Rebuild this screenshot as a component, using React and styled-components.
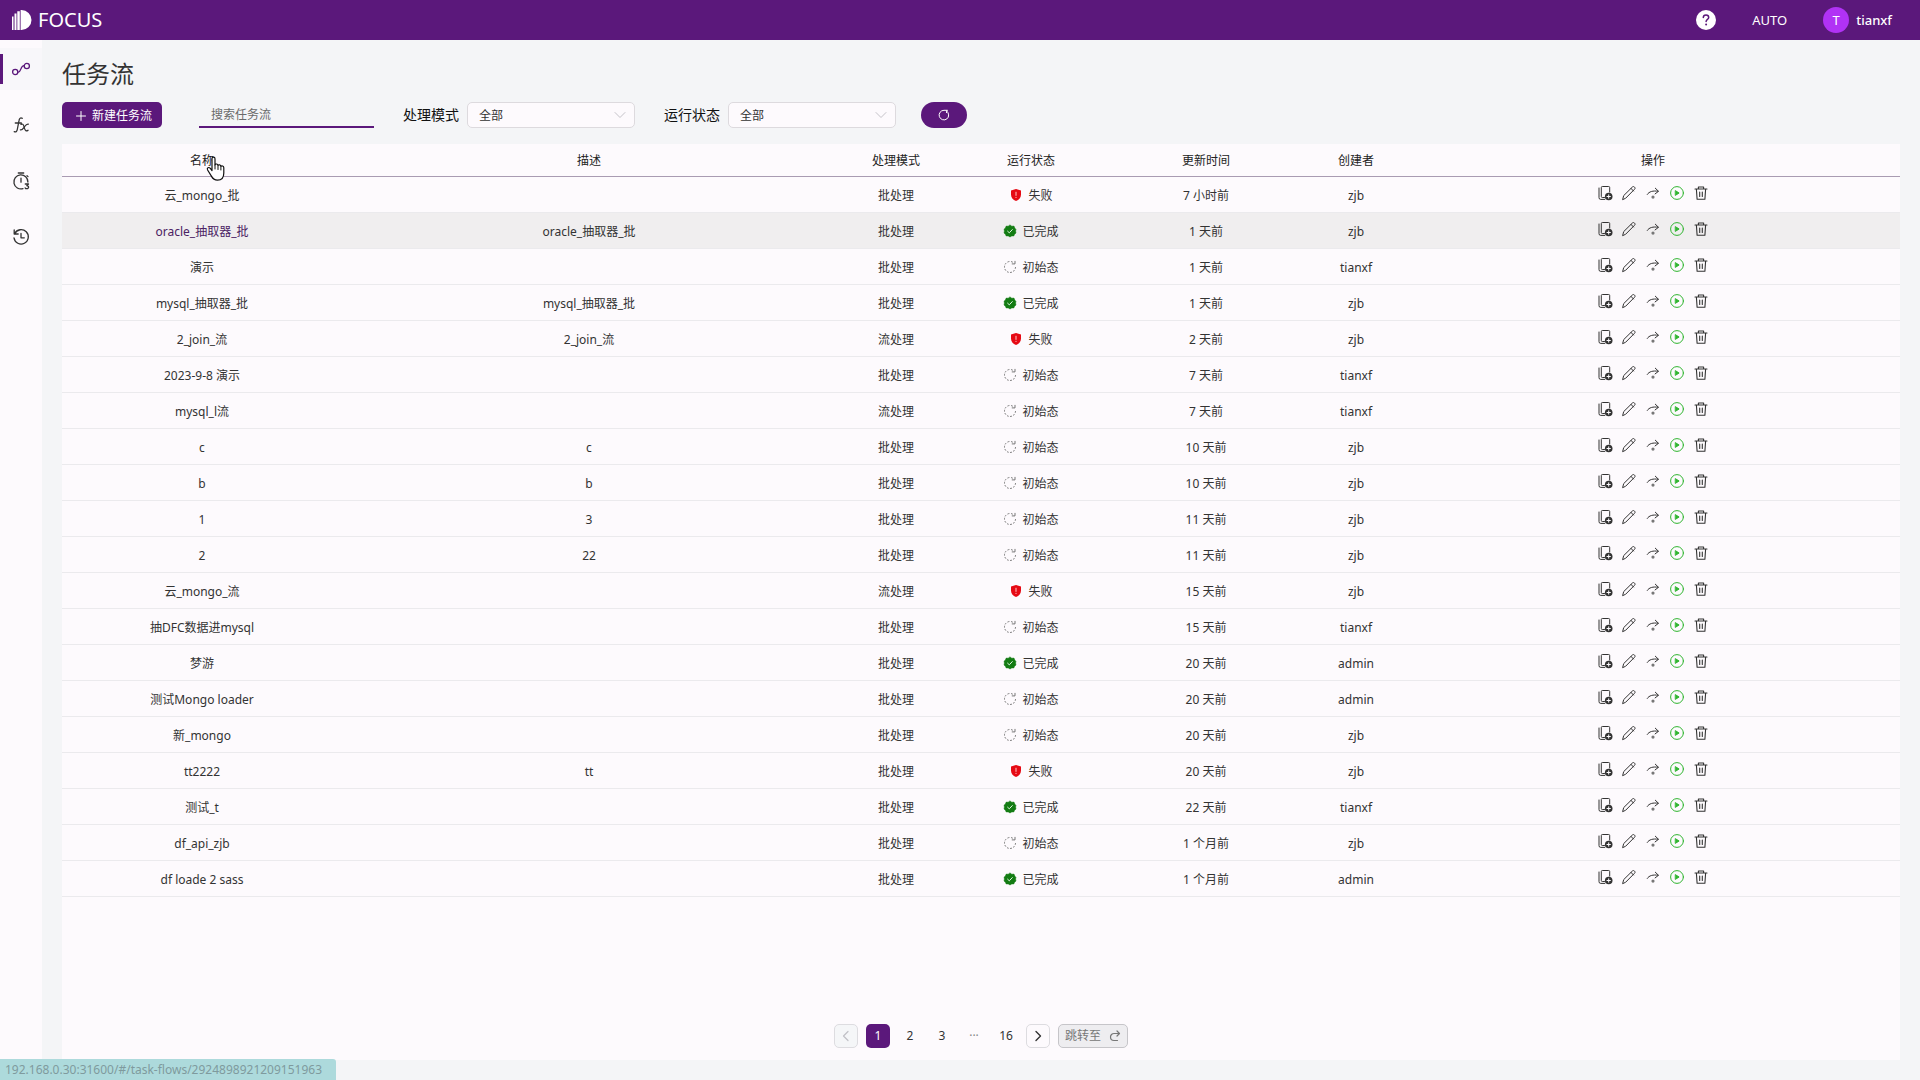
import React from "react";
import styled, { createGlobalStyle, css } from "styled-components";

const PURPLE = "#5b187b";
const PANEL = "#fdfafd";

const GlobalStyle = createGlobalStyle`
  *, *::before, *::after { box-sizing: border-box; }
  body {
    margin: 0;
    background: #f4f5f7;
    color: #333;
    font-family: "Noto Sans", "Noto Sans CJK SC", sans-serif;
    font-size: 12px;
    line-height: 20px;
  }
  button, input, select { font: inherit; color: inherit; }
  svg { display: block; flex: none; }
`;

const Page = styled.div`
  display: flex;
  flex-direction: column;
  min-height: 100vh;
`;

const TopBar = styled.header`
  display: flex;
  align-items: center;
  justify-content: space-between;
  height: 40px;
  padding: 0 28px 0 12px;
  background: ${PURPLE};
  color: #fff;
`;

const Brand = styled.a`
  display: flex;
  align-items: center;
  gap: 6px;
  color: inherit;
  font-size: 20px;
  line-height: 28px;
  text-decoration: none;
`;

const TopActions = styled.div`
  display: flex;
  align-items: center;
  gap: 36px;
  font-size: 13px;
`;

const BarButton = styled.button`
  display: flex;
  align-items: center;
  gap: 7px;
  padding: 0;
  border: 0;
  background: none;
  font-weight: ${(p) => (p.$strong ? 500 : 400)};
  cursor: pointer;
`;

const Avatar = styled.span`
  width: 26px;
  height: 26px;
  border-radius: 50%;
  background: #b132f5;
  font-weight: 400;
  line-height: 26px;
  text-align: center;
`;

const Body = styled.div`
  display: flex;
  flex: 1;
`;

const SideNav = styled.nav`
  display: flex;
  flex-direction: column;
  gap: 14px;
  width: 42px;
  padding-top: 8px;
  background: ${PANEL};
`;

const NavLink = styled.a`
  display: flex;
  align-items: center;
  height: 42px;
  color: ${(p) => (p.$active ? PURPLE : "#333")};
  background: ${(p) => (p.$active ? "#f8f7fa" : "transparent")};
  &::before {
    content: "";
    width: 3px;
    height: 30px;
    margin-right: 8px;
    background: ${(p) => (p.$active ? PURPLE : "transparent")};
  }
`;

const Main = styled.main`
  display: flex;
  flex: 1;
  flex-direction: column;
  min-width: 0;
  padding: 18px 20px 20px;
`;

const Title = styled.h1`
  margin: 0 0 12px;
  font-size: 24px;
  font-weight: 400;
  line-height: 32px;
`;

const Toolbar = styled.div`
  display: flex;
  align-items: center;
  gap: 29px;
  height: 26px;
  margin-bottom: 16px;
`;

const CreateButton = styled.button`
  display: flex;
  align-items: center;
  justify-content: center;
  gap: 5px;
  width: 100px;
  height: 26px;
  margin-right: 8px;
  padding: 1px 0 0 3px;
  border: 0;
  border-radius: 5px;
  background: ${PURPLE};
  color: #fff;
  cursor: pointer;
`;

const SearchInput = styled.input`
  width: 175px;
  height: 26px;
  padding: 0 12px;
  border: 0;
  border-bottom: 2px solid ${PURPLE};
  border-radius: 0;
  outline: 0;
  background: transparent;
  &::placeholder { color: #6a6a6a; opacity: 1; }
`;

const Field = styled.label`
  display: flex;
  align-items: center;
  gap: 8px;
  color: #111;
  font-size: 14px;
`;

const SelectBox = styled.span`
  display: grid;
  align-items: center;
  width: 168px;
  font-size: 12px;
  color: #333;
  & > * { grid-area: 1 / 1; }
  svg {
    justify-self: end;
    margin-right: 9px;
    color: #c4c2c8;
    pointer-events: none;
  }
`;

const Select = styled.select`
  width: 100%;
  height: 26px;
  padding: 1px 11px 0;
  border: 1px solid #dddade;
  border-radius: 5px;
  appearance: none;
  background: ${PANEL};
`;

const RefreshButton = styled.button`
  display: flex;
  align-items: center;
  justify-content: center;
  width: 46px;
  height: 26px;
  margin-left: -4px;
  padding: 0;
  border: 0;
  border-radius: 13px;
  background: ${PURPLE};
  color: #fff;
`;

const Panel = styled.section`
  display: flex;
  flex: 1;
  flex-direction: column;
  justify-content: space-between;
  padding-bottom: 12px;
  background: ${PANEL};
`;

const Table = styled.table`
  width: 100%;
  border-collapse: separate;
  border-spacing: 0;
  table-layout: fixed;
  text-align: center;
`;

const Col = styled.col`
  width: ${(p) => (p.$width ? `${p.$width}px` : "auto")};
`;

const Th = styled.th`
  height: 33px;
  padding: 2px 0 0;
  border-bottom: 1px solid #a99bb2;
  color: #222;
  font-weight: 400;
`;

const Td = styled.td`
  height: 36px;
  padding: 2px 0 0;
  border-bottom: 1px solid #ebeaed;
`;

const Row = styled.tr`
  ${(p) => p.$hovered && css`background: #f0eeef;`}
`;

const FlowLink = styled.a`
  color: ${(p) => (p.$hovered ? "#4b2263" : "inherit")};
  text-decoration: none;
`;

const Status = styled.span`
  display: flex;
  align-items: center;
  justify-content: center;
  gap: 5px;
  svg { margin-bottom: 2px; }
`;

const RowActions = styled.div`
  display: flex;
  justify-content: center;
  gap: 8px;
  padding-bottom: 6px;
`;

const IconButton = styled.button`
  width: 16px;
  height: 16px;
  padding: 0;
  border: 0;
  background: none;
  color: ${(p) => (p.$run ? "#2fb52f" : "#333")};
  cursor: pointer;
`;

const Pager = styled.nav`
  display: flex;
  justify-content: center;
  gap: 8px;
`;

const pageBox = css`
  display: flex;
  align-items: center;
  justify-content: center;
  width: 24px;
  height: 24px;
  padding: 0;
  border: 1px solid transparent;
  border-radius: 5px;
  background: none;
`;

const PageButton = styled.button`
  ${pageBox}
  ${(p) => p.$current && css`background: ${PURPLE}; color: #fff;`}
  ${(p) => p.$outlined && css`border-color: #dddce0;`}
  &:disabled { background: #f5f6f8; color: #c0c0c6; }
`;

const PageDots = styled.span`
  ${pageBox}
  color: #888;
`;

const JumpButton = styled.button`
  ${pageBox}
  justify-content: space-between;
  width: 70px;
  padding: 0 6px;
  border-color: #c6c5c9;
  background: #eeedf0;
  color: #777;
`;

const LinkStatus = styled.div`
  position: fixed;
  bottom: 0;
  left: 0;
  padding: 1px 14px 0 5px;
  border-top-right-radius: 3px;
  background: #addadc;
  color: #7f9a9e;
`;

const Pointer = styled.svg`
  position: absolute;
  top: 156px;
  left: 206px;
`;

const Svg = ({ size = 16, view = 16, width = 1, children, ...rest }) => (
  <svg width={size} height={size} viewBox={`0 0 ${view} ${view}`} fill="none" stroke="currentColor"
    strokeWidth={width} strokeLinecap="round" strokeLinejoin="round" aria-hidden="true" {...rest}>
    {children}
  </svg>
);

const Logo = () => (
  <svg width="20" height="20" viewBox="0 0 20 20" fill="#fff" aria-hidden="true">
    <path d="M0 6.500h1.500V20H0zM2.500 3.500h2V20h-2zM5.300 1.200h2.500V20H5.300zM8.600 0H9.500a10 10 0 0 1 0 20H8.600z" />
  </svg>
);

const HelpIcon = () => (
  <Svg size={20} view={20} width={1.5}>
    <circle cx="10" cy="10" r="10" fill="#fff" stroke="none" />
    <path stroke={PURPLE} d="M7.3 7.6C7.3 6 8.4 5 10 5s2.7 1 2.7 2.4c0 1.9-2.6 2.1-2.6 4.2" />
    <circle cx="10.1" cy="14.6" r="1" fill={PURPLE} stroke="none" />
  </Svg>
);

const FlowIcon = () => (
  <Svg size={20} view={20} width={1.3}>
    <circle cx="4.2" cy="13" r="2.600" />
    <circle cx="15.8" cy="7" r="2.600" />
    <path d="M6.9 13.3c3.6 0 2.2-6.6 6.2-6.6" />
  </Svg>
);

const FxIcon = () => (
  <Svg size={20} view={20} width={1.3}>
    <path d="M11.3 3.3C9.2 2.2 8.3 3.8 8 5.7L6.4 14c-.4 2.3-1.3 3.4-3.2 2.7M4.3 8h6M10 9.4c2-.8 2.3 0 3 2.2l.7 2.3c.6 1.8 1.4 2.4 3.3 1.4M17.3 9.1c-1.5-.3-2.3.5-3.6 2.4s-2.500 3.900-4.300 3.300" />
  </Svg>
);

const TimerIcon = () => (
  <Svg size={20} view={20} width={1.3}>
    <path d="M7.300 2h5.400M10 7.200v4M12 17.600a7 7 0 1 1 4.900-6.500M16 4.600l1 1M14.300 13h3.200l-1.700 1.700c2.600.1 2.200 3.200-.1 3-.7 0-1.300-.3-1.500-.8" />
  </Svg>
);

const HistoryIcon = () => (
  <Svg size={20} view={20} width={1.3}>
    <path d="M3.7 6.6A7.2 7.2 0 1 1 3 10.9M3.2 3v4h4M10 6.4v4.4h3.3" />
  </Svg>
);

const ChevronDown = () => <Svg size={12} view={12}><path d="M1 3.5l5 5 5-5" /></Svg>;
const PlusIcon = () => <Svg size={12} view={12}><path d="M6 1.500v9M1.500 6h9" /></Svg>;
const PrevIcon = () => <Svg size={12} view={12} width={1.2}><path d="M8 1.5L3.5 6 8 10.5" /></Svg>;
const NextIcon = () => <Svg size={12} view={12} width={1.4}><path d="M4 1.5L8.5 6 4 10.5" /></Svg>;

const ReloadIcon = () => (
  <Svg size={14} view={14}>
    <path d="M9.600 3.100A4.800 4.800 0 1 1 7 2.300h3M10.100 2.300l-.6 2.300" />
  </Svg>
);

const JumpIcon = () => (
  <Svg size={12} view={12} width={1.2}>
    <path d="M10 3.500H5a3.500 3.500 0 0 0 0 7h3.500M8 1l2.500 2.500L8 6" />
  </Svg>
);

const FailedIcon = () => (
  <Svg size={14} view={14}>
    <path d="M7 1l5 1.4v4.4c0 3-2 5-5 6.2-3-1.2-5-3.2-5-6.2V2.4z" fill="#e60a14" stroke="none" />
    <path d="M7 4.2v3.2M7 9.3v.2" stroke="#ffc9c9" />
  </Svg>
);

const DoneIcon = () => (
  <Svg size={14} view={14}>
    <path d="M7 1l1.8 1.2 2.2-.1.8 2L13 5.4 12.6 7l.4 2-1.4 1.3-.8 1.7-2-.1L7 13l-1.8-1.1-2 .1-.8-1.7L1 9l.4-2L1 5.2l1.4-1.3.8-1.8 2 .1z" fill="#137c13" stroke="#137c13" strokeWidth="0.5" />
    <path d="M4.6 7.2l1.7 1.6 3-3.2" stroke="#e2f6e2" />
  </Svg>
);

const InitialIcon = () => (
  <Svg size={14} view={14} stroke="#777">
    <path d="M12.500 7A5.500 5.500 0 1 1 10.800 3" strokeDasharray="1.800 1.500" strokeLinecap="butt" />
    <path d="M9.200 3.900h2.800V1.300" />
  </Svg>
);

const CopyIcon = () => (
  <Svg>
    <path d="M7.5 12.5H5.3a1 1 0 0 1-1-1v-9a1 1 0 0 1 1-1h6.4a1 1 0 0 1 1 1v4.6M2 3v9.5A1.8 1.8 0 0 0 3.8 14.4h4" />
    <circle cx="11.7" cy="11.5" r="3.8" fill="currentColor" stroke="none" />
    <path d="M10 11.5h3.4M11.7 9.8v3.4" stroke={PANEL} />
  </Svg>
);

const EditIcon = () => (
  <Svg>
    <path d="M1.7 14.3l1-3.7 8.6-8.5c.8-.8 1.5-.7 2.2 0s.8 1.4 0 2.2L4.9 13zM10 3.4L12.500 6" />
  </Svg>
);

const ForwardIcon = () => (
  <Svg>
    <path d="M2.3 9.4C4 6.5 8 5.5 13 6.2M10.3 3.2l3.2 3.1-3.4 2.6" />
    <circle cx="8" cy="12.1" r="1.6" fill="#777" stroke="none" />
  </Svg>
);

const RunIcon = () => (
  <Svg>
    <circle cx="8" cy="8" r="6.4" />
    <path d="M6.600 5.800l3.500 2.200-3.500 2.200z" fill="currentColor" />
  </Svg>
);

const DeleteIcon = () => (
  <Svg width={1.1}>
    <path d="M2 4h12M5.4 3.8V2h5.2v1.8M3.4 4.2l.7 10h7.8l.7-10M6.7 7v4.5M9.3 7v4.5" />
  </Svg>
);

const STATUS = {
  failed: ["失败", FailedIcon],
  done: ["已完成", DoneIcon],
  initial: ["初始态", InitialIcon],
};

const flows = [
  ["云_mongo_批", "", "批处理", "failed", "7 小时前", "zjb"],
  ["oracle_抽取器_批", "oracle_抽取器_批", "批处理", "done", "1 天前", "zjb"],
  ["演示", "", "批处理", "initial", "1 天前", "tianxf"],
  ["mysql_抽取器_批", "mysql_抽取器_批", "批处理", "done", "1 天前", "zjb"],
  ["2_join_流", "2_join_流", "流处理", "failed", "2 天前", "zjb"],
  ["2023-9-8 演示", "", "批处理", "initial", "7 天前", "tianxf"],
  ["mysql_l流", "", "流处理", "initial", "7 天前", "tianxf"],
  ["c", "c", "批处理", "initial", "10 天前", "zjb"],
  ["b", "b", "批处理", "initial", "10 天前", "zjb"],
  ["1", "3", "批处理", "initial", "11 天前", "zjb"],
  ["2", "22", "批处理", "initial", "11 天前", "zjb"],
  ["云_mongo_流", "", "流处理", "failed", "15 天前", "zjb"],
  ["抽DFC数据进mysql", "", "批处理", "initial", "15 天前", "tianxf"],
  ["梦游", "", "批处理", "done", "20 天前", "admin"],
  ["测试Mongo loader", "", "批处理", "initial", "20 天前", "admin"],
  ["新_mongo", "", "批处理", "initial", "20 天前", "zjb"],
  ["tt2222", "tt", "批处理", "failed", "20 天前", "zjb"],
  ["测试_t", "", "批处理", "done", "22 天前", "tianxf"],
  ["df_api_zjb", "", "批处理", "initial", "1 个月前", "zjb"],
  ["df loade 2 sass", "", "批处理", "done", "1 个月前", "admin"],
];

const columns = [
  ["名称", 280], ["描述"], ["处理模式", 120], ["运行状态", 150],
  ["更新时间", 200], ["创建者", 100], ["操作"],
];

const actions = [
  ["复制", CopyIcon], ["编辑", EditIcon], ["转交", ForwardIcon], ["运行", RunIcon], ["删除", DeleteIcon],
];

const navItems = [
  ["任务流", FlowIcon], ["函数", FxIcon], ["定时", TimerIcon], ["历史", HistoryIcon],
];

const FilterSelect = ({ id, label }) => (
  <Field htmlFor={id}>
    {label}
    <SelectBox>
      <Select id={id}><option>全部</option></Select>
      <ChevronDown />
    </SelectBox>
  </Field>
);

const FlowRow = ({ flow, hovered }) => {
  const [name, description, mode, status, updated, creator] = flow;
  const [statusText, StatusIcon] = STATUS[status];
  return (
    <Row $hovered={hovered}>
      <Td><FlowLink href="#/task-flows" $hovered={hovered}>{name}</FlowLink></Td>
      <Td>{description}</Td>
      <Td>{mode}</Td>
      <Td><Status><StatusIcon />{statusText}</Status></Td>
      <Td>{updated}</Td>
      <Td>{creator}</Td>
      <Td>
        <RowActions>
          {actions.map(([label, Icon]) => (
            <IconButton key={label} type="button" aria-label={label} $run={label === "运行"}><Icon /></IconButton>
          ))}
        </RowActions>
      </Td>
    </Row>
  );
};

export default function App() {
  return (
    <>
      <GlobalStyle />
      <Page>
        <TopBar>
          <Brand href="#/"><Logo />FOCUS</Brand>
          <TopActions>
            <BarButton type="button" aria-label="帮助"><HelpIcon /></BarButton>
            <BarButton type="button">AUTO</BarButton>
            <BarButton type="button" $strong><Avatar>T</Avatar>tianxf</BarButton>
          </TopActions>
        </TopBar>
        <Body>
          <SideNav>
            {navItems.map(([label, Icon], i) => (
              <NavLink key={label} href="#/" aria-label={label} $active={i === 0}><Icon /></NavLink>
            ))}
          </SideNav>
          <Main>
            <Title>任务流</Title>
            <Toolbar>
              <CreateButton type="button"><PlusIcon />新建任务流</CreateButton>
              <SearchInput type="text" placeholder="搜索任务流" aria-label="搜索任务流" />
              <FilterSelect id="mode" label="处理模式" />
              <FilterSelect id="status" label="运行状态" />
              <RefreshButton type="button" aria-label="刷新"><ReloadIcon /></RefreshButton>
            </Toolbar>
            <Panel>
              <Table>
                <colgroup>{columns.map(([label, width]) => <Col key={label} $width={width} />)}</colgroup>
                <thead>
                  <tr>{columns.map(([label]) => <Th key={label} scope="col">{label}</Th>)}</tr>
                </thead>
                <tbody>
                  {flows.map((flow, i) => <FlowRow key={flow[0]} flow={flow} hovered={i === 1} />)}
                </tbody>
              </Table>
              <Pager aria-label="分页">
                <PageButton type="button" aria-label="上一页" $outlined disabled><PrevIcon /></PageButton>
                <PageButton type="button" $current>1</PageButton>
                <PageButton type="button">2</PageButton>
                <PageButton type="button">3</PageButton>
                <PageDots>···</PageDots>
                <PageButton type="button">16</PageButton>
                <PageButton type="button" aria-label="下一页" $outlined><NextIcon /></PageButton>
                <JumpButton type="button">跳转至<JumpIcon /></JumpButton>
              </Pager>
            </Panel>
          </Main>
        </Body>
      </Page>
      <LinkStatus>192.168.0.30:31600/#/task-flows/2924898921209151963</LinkStatus>
      <Pointer width="20" height="26" viewBox="0 0 20 26" aria-hidden="true">
        <path d="M6 2.8C6 .6 9 .6 9 2.8V9c.3-1.500 2.800-1.300 3 .5.500-1.200 2.700-.9 2.900.9.700-1 2.900-.6 2.900 1.300v5.200c0 4.600-2.200 7.200-6.300 7.200-3.300 0-4.800-1.500-6.100-4L1.600 14c-1-2 1-3.300 2.500-1.800L6 14.500z"
          fill="#fff" stroke="#111" strokeWidth="1.2" strokeLinejoin="round" />
        <path d="M9 9v4M12 10v3.500M14.900 11v3" stroke="#111" strokeLinecap="round" />
      </Pointer>
    </>
  );
}
